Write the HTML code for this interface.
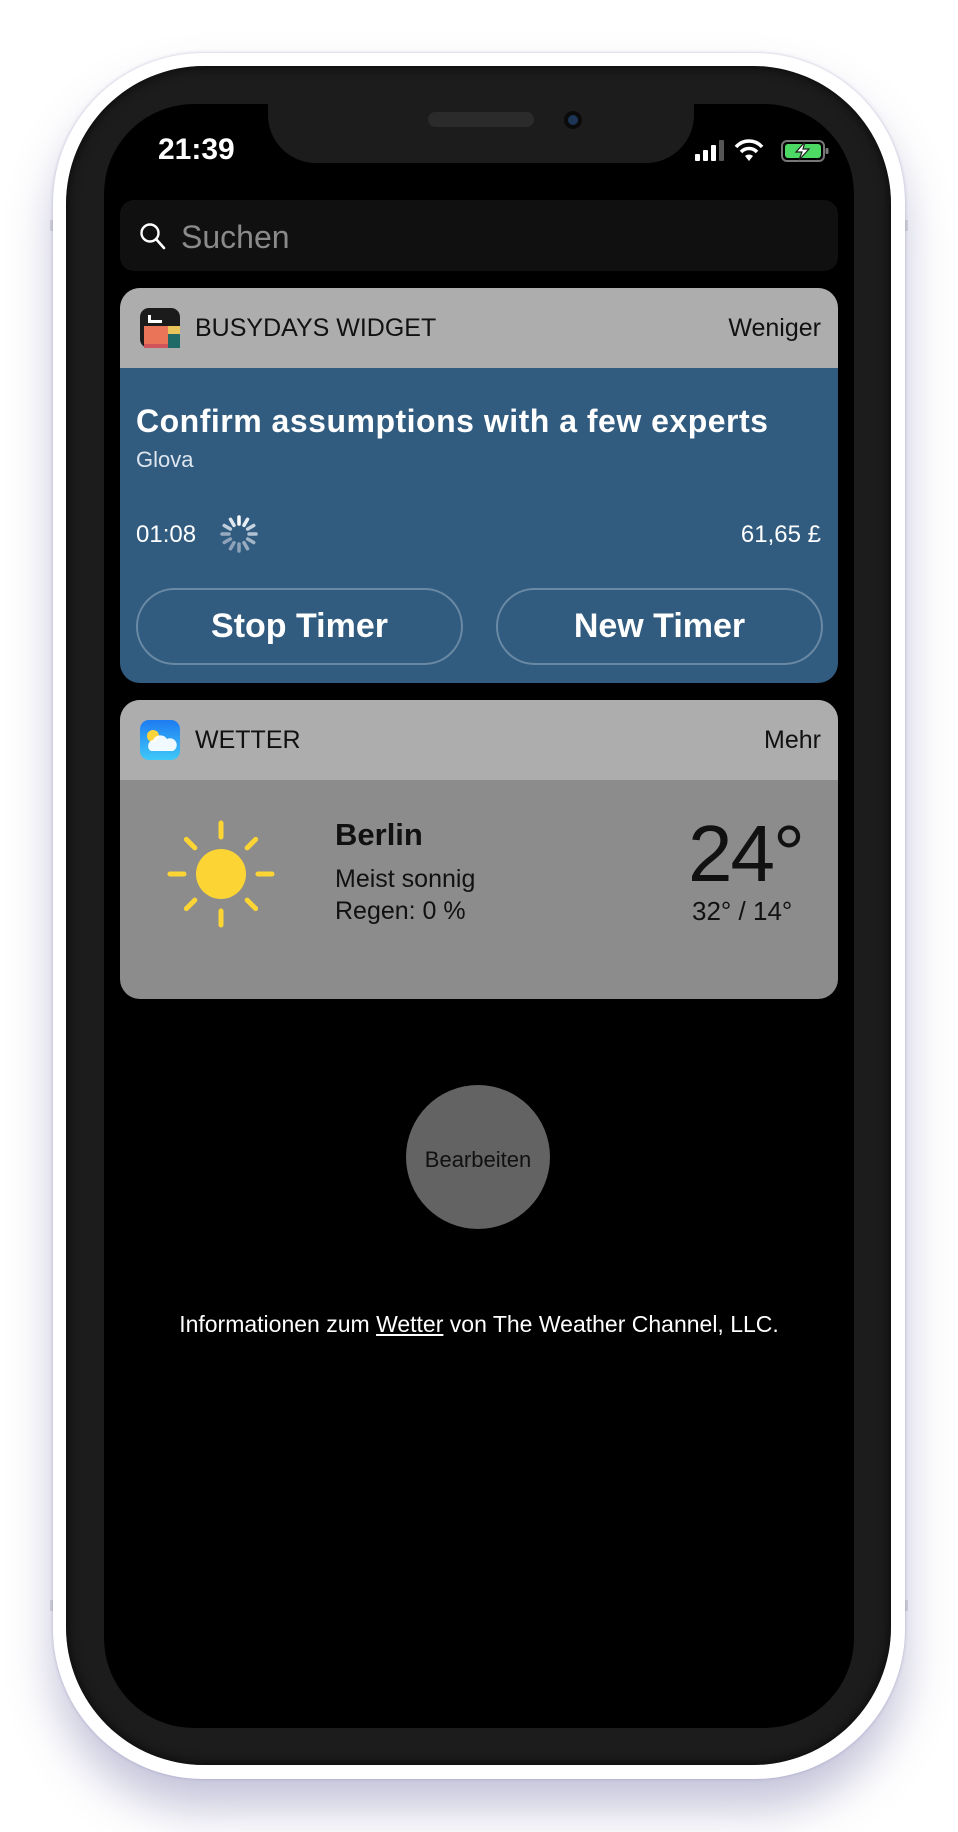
<!DOCTYPE html>
<html><head><meta charset="utf-8"><style>
*{margin:0;padding:0;box-sizing:border-box}
body{width:958px;height:1832px;background:#fff;position:relative;overflow:hidden;font-family:"Liberation Sans",sans-serif}
.abs{position:absolute}
.band{position:absolute;left:50px;width:858px;height:11px;background:#e3e3e3}
.outer{left:53px;top:53px;width:852px;height:1726px;border-radius:150px;background:#fff;box-shadow:0 30px 45px rgba(90,85,150,.35),0 0 3px rgba(90,85,150,.35)}
.body{left:66px;top:66px;width:825px;height:1699px;border-radius:138px;background:#1c1c1c;box-shadow:inset 0 0 12px rgba(0,0,0,.8)}
.screen{left:104px;top:104px;width:750px;height:1624px;border-radius:90px;background:#000;overflow:hidden}
.notch{left:164px;top:-10px;width:426px;height:69px;background:#1c1c1c;border-radius:0 0 48px 48px}
.card{position:absolute;left:16px;width:718px;border-radius:20px;overflow:hidden}
.hdr{height:80px;background:#adadad;position:relative;color:#111;font-size:25px}
.btn{position:absolute;top:300px;width:327px;height:77px;border:2px solid rgba(255,255,255,.28);border-radius:39px;color:#fff;font-weight:bold;font-size:34px;text-align:center;line-height:73px}
</style></head><body>
<div class="band" style="top:220px"></div>
<div class="band" style="top:1600px"></div>
<div class="abs outer"></div>
<div class="abs body"></div>
<div class="abs screen">
  <div class="abs notch">
    <div class="abs" style="left:160px;top:18px;width:106px;height:15px;border-radius:8px;background:#2b2b2b"></div>
    <div class="abs" style="left:296px;top:17px;width:18px;height:18px;border-radius:9px;background:#0b0b0b"><div class="abs" style="left:4px;top:4px;width:10px;height:10px;border-radius:5px;background:#1d3556"></div></div>
  </div>
  <div class="abs" style="left:54px;top:29px;color:#fff;font-size:30px;font-weight:bold">21:39</div>
  <svg class="abs" style="left:588px;top:34px" width="140" height="26" viewBox="0 0 140 26">
    <rect x="3" y="16" width="5" height="7" rx="1" fill="#fff"/><rect x="11" y="12" width="5" height="11" rx="1" fill="#fff"/><rect x="19" y="7" width="5" height="16" rx="1" fill="#fff"/><rect x="27" y="2" width="5" height="21" rx="1" fill="#555"/>
    <path d="M44 9 A17 17 0 0 1 70 9" stroke="#fff" stroke-width="3.5" fill="none"/><path d="M49 14 A11 11 0 0 1 65 14" stroke="#fff" stroke-width="3.5" fill="none"/><path d="M57 23 L53 18 A6 6 0 0 1 61 18 Z" fill="#fff"/>
    <rect x="90" y="3" width="42" height="20" rx="5" fill="none" stroke="#777" stroke-width="2"/><rect x="93" y="6" width="36" height="14" rx="3" fill="#4cd964"/><rect x="133.5" y="10" width="3" height="6" rx="1" fill="#777"/>
    <path d="M113 4 L104 14 L110 14 L107 22 L117 11 L111 11 Z" fill="#fff" stroke="#1c1c1c" stroke-width="1.2"/>
  </svg>
  <div class="abs" style="left:16px;top:96px;width:718px;height:71px;border-radius:14px;background:#101010">
    <svg class="abs" style="left:19px;top:22px" width="28" height="30"><circle cx="11" cy="11" r="8.5" stroke="#fff" stroke-width="2.4" fill="none"/><path d="M17 17 L25 26" stroke="#fff" stroke-width="2.6" stroke-linecap="round"/></svg>
    <div class="abs" style="left:61px;top:19px;font-size:32px;color:#8a8a8a">Suchen</div>
  </div>
  <div class="card" style="top:184px;height:395px;background:#315c80">
    <div class="hdr">
      <svg class="abs" style="left:20px;top:20px" width="40" height="40" viewBox="0 0 40 40"><rect width="40" height="40" rx="9" fill="#1b1b1b"/><rect x="8" y="7" width="3" height="8" fill="#fff"/><rect x="8" y="12" width="14" height="3" fill="#fff"/><rect x="4" y="18" width="24" height="22" fill="#e97458"/><rect x="28" y="18" width="12" height="8" fill="#e8c35a"/><rect x="28" y="26" width="12" height="14" fill="#1f6a66"/><rect x="4" y="36" width="24" height="4" fill="#d0555a"/></svg>
      <div class="abs" style="left:75px;top:26px">BUSYDAYS WIDGET</div>
      <div class="abs" style="right:17px;top:26px">Weniger</div>
    </div>
    <div class="abs" style="left:16px;top:115px;color:#fff;font-weight:bold;font-size:32px;letter-spacing:0.5px;white-space:nowrap">Confirm assumptions with a few experts</div>
    <div class="abs" style="left:16px;top:159px;color:#dde5ee;font-size:22px">Glova</div>
    <div class="abs" style="left:16px;top:233px;color:#fff;font-size:24px">01:08</div>
    <svg class="abs" style="left:99px;top:226px" width="40" height="40" viewBox="-20 -20 40 40">
      <g stroke-width="3.5" stroke-linecap="round">
        <line x1="0" y1="-10" x2="0" y2="-17" stroke="#fff"/>
        <line x1="0" y1="-10" x2="0" y2="-17" stroke="#e8eef5" transform="rotate(30)"/>
        <line x1="0" y1="-10" x2="0" y2="-17" stroke="#c8d4e0" transform="rotate(60)"/>
        <line x1="0" y1="-10" x2="0" y2="-17" stroke="#b3c2d2" transform="rotate(90)"/>
        <line x1="0" y1="-10" x2="0" y2="-17" stroke="#a4b5c7" transform="rotate(120)"/>
        <line x1="0" y1="-10" x2="0" y2="-17" stroke="#98abbf" transform="rotate(150)"/>
        <line x1="0" y1="-10" x2="0" y2="-17" stroke="#8ea3b9" transform="rotate(180)"/>
        <line x1="0" y1="-10" x2="0" y2="-17" stroke="#8ea3b9" transform="rotate(210)"/>
        <line x1="0" y1="-10" x2="0" y2="-17" stroke="#8ea3b9" transform="rotate(240)"/>
        <line x1="0" y1="-10" x2="0" y2="-17" stroke="#98abbf" transform="rotate(270)"/>
        <line x1="0" y1="-10" x2="0" y2="-17" stroke="#c0cddb" transform="rotate(300)"/>
        <line x1="0" y1="-10" x2="0" y2="-17" stroke="#e0e7ef" transform="rotate(330)"/>
      </g>
    </svg>
    <div class="abs" style="right:17px;top:233px;color:#fff;font-size:24px">61,65 £</div>
    <div class="btn" style="left:16px">Stop Timer</div>
    <div class="btn" style="left:376px">New Timer</div>
  </div>
  <div class="card" style="top:596px;height:299px;background:#8c8c8c">
    <div class="hdr">
      <svg class="abs" style="left:20px;top:20px" width="40" height="40" viewBox="0 0 40 40"><defs><linearGradient id="g" x1="0" y1="0" x2="0" y2="1"><stop offset="0" stop-color="#1e7cf2"/><stop offset="1" stop-color="#3fc8f8"/></linearGradient></defs><rect width="40" height="40" rx="9" fill="url(#g)"/><circle cx="13" cy="16" r="6" fill="#ffd43b"/><path d="M11 31 a6 6 0 0 1 2-11 a8 8 0 0 1 14-1 a6 6 0 0 1 6 12 z" fill="#fff" opacity=".93"/></svg>
      <div class="abs" style="left:75px;top:26px">WETTER</div>
      <div class="abs" style="right:17px;top:26px">Mehr</div>
    </div>
    <svg class="abs" style="left:46px;top:119px" width="110" height="110" viewBox="-55 -55 110 110">
      <circle r="25" fill="#fcd535"/>
      <g stroke="#fcd535" stroke-width="5" stroke-linecap="round">
        <line y1="-37" y2="-51"/><line y1="37" y2="51"/><line x1="-37" x2="-51"/><line x1="37" x2="51"/>
        <line y1="-37" y2="-49" transform="rotate(45)"/><line y1="-37" y2="-49" transform="rotate(135)"/><line y1="-37" y2="-49" transform="rotate(225)"/><line y1="-37" y2="-49" transform="rotate(315)"/>
      </g>
    </svg>
    <div class="abs" style="left:215px;top:117px;font-size:31px;font-weight:bold;color:#111">Berlin</div>
    <div class="abs" style="left:215px;top:165px;font-size:25px;color:#111">Meist sonnig</div>
    <div class="abs" style="left:215px;top:197px;font-size:25px;color:#111">Regen: 0 %</div>
    <div class="abs" style="left:568px;top:108px;font-size:80px;color:#111;letter-spacing:-2px">24°</div>
    <div class="abs" style="left:572px;top:196px;font-size:26px;color:#111">32° / 14°</div>
  </div>
  <div class="abs" style="left:302px;top:981px;width:144px;height:144px;border-radius:72px;background:#636363;color:#111;font-size:22px;text-align:center;line-height:150px">Bearbeiten</div>
  <div class="abs" style="left:0;width:750px;top:1207px;text-align:center;color:#fff;font-size:23px">Informationen zum <u>Wetter</u> von The Weather Channel, LLC.</div>
</div>
</body></html>
